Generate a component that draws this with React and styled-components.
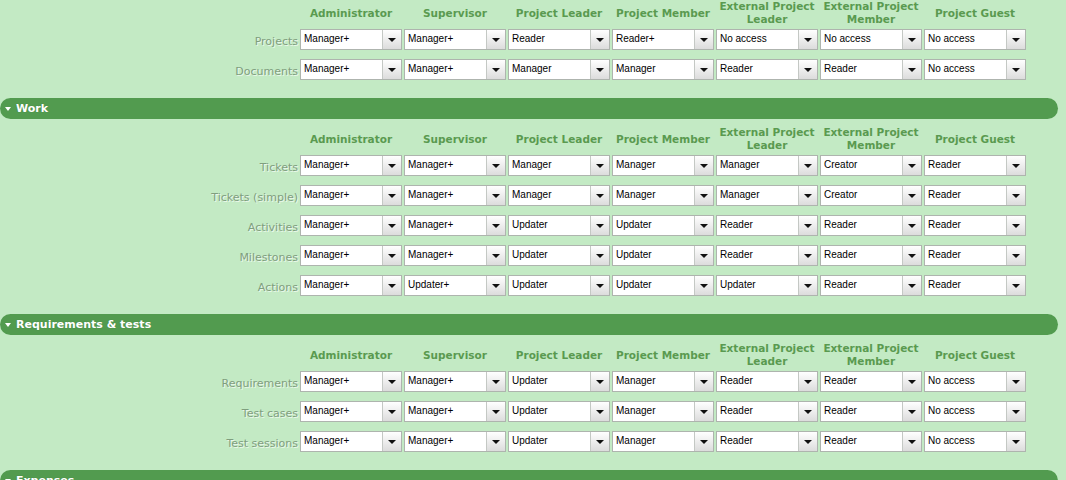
import React from "react";
import styled, { createGlobalStyle } from "styled-components";

const GlobalStyle = createGlobalStyle`
  html, body {
    margin: 0;
    padding: 0;
    background: #c3eac4;
  }
  body {
    font-family: "DejaVu Sans", Verdana, sans-serif;
    overflow: hidden;
  }
`;

const Page = styled.div`
  width: 1058px;
  display: flex;
  flex-direction: column;
`;

const Section = styled.div`
  display: flex;
  flex-direction: column;
  padding-bottom: 18px;
`;

const Bar = styled.div`
  height: 21px;
  background: #529b4f;
  border-radius: 11px;
  display: flex;
  align-items: center;
  gap: 5px;
  padding-left: 5px;
  margin-bottom: 7px;
  color: #fff;
  font-weight: bold;
  font-size: 11px;
  text-shadow: 0 0 1px rgba(40, 90, 40, 0.4);
`;

const Caret = styled.span`
  width: 0;
  height: 0;
  border-left: 3.5px solid transparent;
  border-right: 3.5px solid transparent;
  border-top: 4px solid #fff;
  margin-top: 1px;
`;

const Grid = styled.div`
  display: grid;
  grid-template-columns: 298px repeat(7, 102px);
  column-gap: 2px;
  align-items: center;
`;

const HeadRow = styled(Grid)`
  height: 26px;
  margin-bottom: 3px;
`;

const Rows = styled.div`
  display: flex;
  flex-direction: column;
  gap: 9px;
`;

const ColHead = styled.div`
  text-align: center;
  font-weight: bold;
  font-size: 10.5px;
  line-height: 13px;
  color: #5a9a50;
`;

const Label = styled.div`
  text-align: right;
  font-size: 11px;
  color: #7f9e7e;
  text-shadow: 1px 1px 0 #eaf8ea;
  padding-top: 3px;
`;

const Select = styled.div`
  height: 21px;
  box-sizing: border-box;
  border: 1px solid #aeb4ae;
  background: #fff;
  display: flex;
  align-items: stretch;
`;

const SelectText = styled.div`
  flex: 1;
  padding-left: 3px;
  font-family: "Liberation Sans", Arial, sans-serif;
  font-size: 10px;
  line-height: 18px;
  color: #000;
`;

const SelectButton = styled.div`
  width: 18px;
  border-left: 1px solid #c4c8c4;
  background: linear-gradient(#ffffff, #dcdcdc);
  display: flex;
  align-items: center;
  justify-content: center;

  &::after {
    content: "";
    border-left: 4px solid transparent;
    border-right: 4px solid transparent;
    border-top: 4px solid #111;
  }
`;

const roles = [
  ["Administrator"],
  ["Supervisor"],
  ["Project Leader"],
  ["Project Member"],
  ["External Project", "Leader"],
  ["External Project", "Member"],
  ["Project Guest"],
];

const sections = [
  {
    title: null,
    rows: [
      ["Projects", ["Manager+", "Manager+", "Reader", "Reader+", "No access", "No access", "No access"]],
      ["Documents", ["Manager+", "Manager+", "Manager", "Manager", "Reader", "Reader", "No access"]],
    ],
  },
  {
    title: "Work",
    rows: [
      ["Tickets", ["Manager+", "Manager+", "Manager", "Manager", "Manager", "Creator", "Reader"]],
      ["Tickets (simple)", ["Manager+", "Manager+", "Manager", "Manager", "Manager", "Creator", "Reader"]],
      ["Activities", ["Manager+", "Manager+", "Updater", "Updater", "Reader", "Reader", "Reader"]],
      ["Milestones", ["Manager+", "Manager+", "Updater", "Updater", "Reader", "Reader", "Reader"]],
      ["Actions", ["Manager+", "Updater+", "Updater", "Updater", "Updater", "Reader", "Reader"]],
    ],
  },
  {
    title: "Requirements & tests",
    rows: [
      ["Requirements", ["Manager+", "Manager+", "Updater", "Manager", "Reader", "Reader", "No access"]],
      ["Test cases", ["Manager+", "Manager+", "Updater", "Manager", "Reader", "Reader", "No access"]],
      ["Test sessions", ["Manager+", "Manager+", "Updater", "Manager", "Reader", "Reader", "No access"]],
    ],
  },
];

const Dropdown = ({ value }) => (
  <Select>
    <SelectText>{value}</SelectText>
    <SelectButton />
  </Select>
);

const App = () => (
  <Page>
    <GlobalStyle />
    {sections.map((s, i) => (
      <Section key={i}>
        {s.title && (
          <Bar>
            <Caret />
            {s.title}
          </Bar>
        )}
        <HeadRow>
          <div />
          {roles.map((r) => (
            <ColHead key={r.join(" ")}>
              {r.map((line) => (
                <div key={line}>{line}</div>
              ))}
            </ColHead>
          ))}
        </HeadRow>
        <Rows>
          {s.rows.map(([name, values]) => (
            <Grid key={name}>
              <Label>{name}</Label>
              {values.map((v, j) => (
                <Dropdown key={j} value={v} />
              ))}
            </Grid>
          ))}
        </Rows>
      </Section>
    ))}
    <Bar>
      <Caret />
      Expenses
    </Bar>
  </Page>
);

export default App;
